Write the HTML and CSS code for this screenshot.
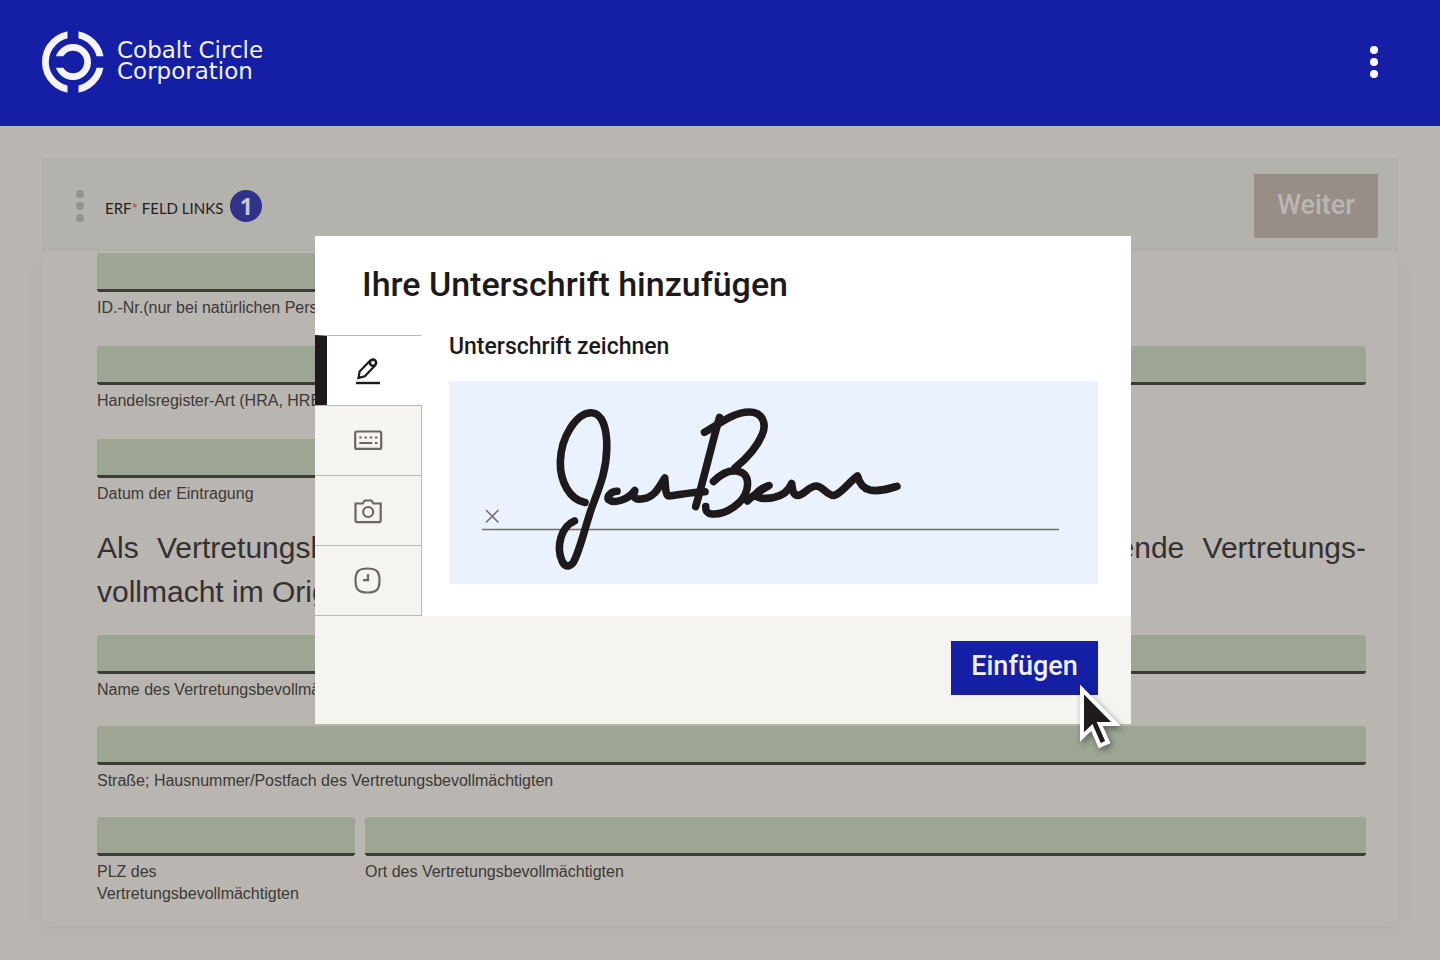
FILE: index.html
```html
<!DOCTYPE html>
<html lang="de">
<head>
    <meta charset="UTF-8">
    <meta name="viewport" content="width=device-width, initial-scale=1.0">
    <title>Cobalt Circle Corporation</title>
    <link rel="stylesheet" href="styles.css">
</head>
<body>
    <header class="header">
        <a class="brand" href="#">
            <svg class="brand-logo" viewBox="0 0 62 62" aria-hidden="true">
                <circle class="ring" cx="31" cy="31" r="27.6"/>
                <circle class="ring" cx="31" cy="31" r="14.6"/>
                <path class="gap" d="M25.5 0h11v10h-11zM25.5 52h11v10h-11zM50 25.3h12v11.4h-12zM10 25.3h13v11.4h-13z"/>
            </svg>
            <span class="brand-name">Cobalt Circle<br>Corporation</span>
        </a>
        <button class="dots-button" type="button" aria-label="Menü">
            <svg class="dots" viewBox="0 0 8 32"><circle cx="4" cy="4" r="4"/><circle cx="4" cy="16" r="4"/><circle cx="4" cy="28" r="4"/></svg>
        </button>
    </header>

    <main class="main">
        <div class="toolbar">
            <button class="dots-button muted" type="button" aria-label="Optionen">
                <svg class="dots" viewBox="0 0 8 32"><circle cx="4" cy="4" r="4"/><circle cx="4" cy="16" r="4"/><circle cx="4" cy="28" r="4"/></svg>
            </button>
            <span class="toolbar-text">ERF<span class="star">*</span> FELD LINKS</span>
            <span class="badge">1</span>
            <button class="next-button" type="button" disabled>Weiter</button>
        </div>

        <form class="document">
            <div class="field half">
                <input type="text" id="id-nr">
                <label for="id-nr">ID.-Nr.(nur bei natürlichen Personen)</label>
            </div>
            <div class="field">
                <input type="text" id="register">
                <label for="register">Handelsregister-Art (HRA, HRB)</label>
            </div>
            <div class="field half last">
                <input type="text" id="datum">
                <label for="datum">Datum der Eintragung</label>
            </div>

            <div class="paragraph">
                <p class="line full">Als Vertretungsbevollmächtigter fügen Sie bitte zusätzlich die entsprechende Vertretungs-</p>
                <p class="line">vollmacht im Original bei.</p>
            </div>

            <div class="field tight">
                <input type="text" id="name">
                <label for="name">Name des Vertretungsbevollmächtigten</label>
            </div>
            <div class="field tight">
                <input type="text" id="strasse">
                <label for="strasse">Straße; Hausnummer/Postfach des Vertretungsbevollmächtigten</label>
            </div>
            <div class="field-row">
                <div class="field plz">
                    <input type="text" id="plz">
                    <label for="plz">PLZ des Vertretungsbevollmächtigten</label>
                </div>
                <div class="field ort">
                    <input type="text" id="ort">
                    <label for="ort">Ort des Vertretungsbevollmächtigten</label>
                </div>
            </div>
        </form>
    </main>

    <div class="overlay">
        <section class="modal" role="dialog" aria-labelledby="modal-title">
            <h1 class="modal-title" id="modal-title">Ihre Unterschrift hinzufügen</h1>

            <div class="modal-body">
                <div class="tabs">
                    <button class="tab active" type="button" aria-label="Zeichnen">
                        <svg viewBox="0 0 30 30">
                            <path d="M3 27h24" stroke-width="2.4"/>
                            <path d="M17.400 4.300L6.600 15.600L5.500 21.900L11.800 20.200L22.300 9.300"/>
                            <circle cx="20" cy="6.700" r="3.100" stroke-width="2.500"/>
                        </svg>
                    </button>
                    <button class="tab" type="button" aria-label="Tippen">
                        <svg viewBox="0 0 30 30">
                            <rect x="2.200" y="5.500" width="26" height="17.400" rx="1.500"/>
                            <path d="M6.300 11.500h2.400M11.500 11.500h2.400M16.800 11.500h2.400M22 11.500h2.400M6.300 17h12.900M22 17h2.400"/>
                        </svg>
                    </button>
                    <button class="tab" type="button" aria-label="Foto">
                        <svg viewBox="0 0 30 30">
                            <path d="M2.500 7.500h7.300l2-3h6.600l2 3h7.300v16.700a2 2 0 0 1-2 2H4.500a2 2 0 0 1-2-2z"/>
                            <circle cx="15.200" cy="16" r="5"/>
                        </svg>
                    </button>
                    <button class="tab" type="button" aria-label="Verlauf">
                        <svg viewBox="0 0 30 30">
                            <path d="M14.500 2.500C23.500 2.500 26.500 5.500 26.500 14.500S23.500 26.500 14.500 26.500S2.500 23.500 2.500 14.500S5.500 2.500 14.500 2.500z"/>
                            <path d="M15 8v6.200h-5"/>
                        </svg>
                    </button>
                </div>

                <div class="panel">
                    <h2 class="panel-title">Unterschrift zeichnen</h2>
                    <div class="pad">
                        <svg class="pad-drawing" viewBox="449 381 649 203" role="img" aria-label="Unterschrift">
                            <path class="pad-line" d="M482 529.500H1059M486 510l12.500 12.500M498.500 510L486 522.500"/>
                            <g class="ink">
                                <path d="M585 502.500C570 500 560 482 560.300 462C561 436 577 412.500 591.500 412.700C603 413 607 430 606.800 447C606.500 472 599 488 592 507C586 524 581 546 575 559C572 567 566 568 562.500 562C555 546 562 526 574.500 521"/>
                                <path d="M617 491.300C612 491 606.500 496 608.500 499.500C614 504 628 500 634.800 490.500C631 500 639 499.500 643 498.800C655 497 659 487 664.800 478C665.500 487 665.500 496 669 496C676 495.500 692 492 705 491.800"/>
                                <path d="M719.500 417.500C711 447 704 478 695.700 506.500"/>
                                <path d="M704.500 432.300C719 424 734 412 749 412C763 412 767 424 762 435C757 447 746 459 735 468"/>
                                <path d="M713.500 481.500C720 475 728 470 736 471C746 472 749 479 747 489C744 503 726 515 712 514C707 513.500 705.500 511 705.700 506.500"/>
                                <path d="M747.500 501C753 495 761 490.500 769 485.500C762 488 757 491.500 755 496C763 500 785 500 791.700 483.500C792.500 490 793 495.500 798.500 495.500C805 494 809 486 816.500 486C823 486.500 827 495.500 834 495.500C841 494 850 481 857.500 476C859 482 862 488 870 490C879 492 888 489 897 486.300"/>
                            </g>
                        </svg>
                    </div>
                </div>
            </div>

            <div class="modal-footer">
                <div class="insert">
                    <button class="insert-button" type="button">Einfügen</button>
                    <svg class="cursor" viewBox="0 0 50 74" aria-hidden="true">
                        <path d="M8 9.500V57l9.800-9.500 8 18.200 8-3.500-8-18.200H42z"/>
                    </svg>
                </div>
            </div>
        </section>
    </div>
</body>
</html>
```
FILE: styles.css
```css
* {
    box-sizing: border-box;
}

body {
    margin: 0;
    min-height: 100vh;
    font-family: Roboto, "Liberation Sans", sans-serif;
    background: #bab6b1;
    color: #1e191a;
}

button {
    font-family: inherit;
    border: none;
    padding: 0;
    cursor: pointer;
}

.header {
    display: flex;
    justify-content: space-between;
    align-items: center;
    height: 126px;
    padding: 0 62px 2px 42px;
    background: #151fa5;
}

.brand {
    display: flex;
    align-items: center;
    gap: 13px;
    color: #f3f3f9;
    text-decoration: none;
}

.brand-logo {
    width: 62px;
    height: 62px;
}

.brand-logo .ring {
    fill: none;
    stroke: #f3f3f9;
    stroke-width: 6.8;
}

.brand-logo .gap {
    fill: #151fa5;
}

.brand-name {
    padding-bottom: 2px;
    font-family: "DejaVu Sans", sans-serif;
    font-size: 23px;
    line-height: 21px;
}

.dots-button {
    background: none;
    color: #ffffff;
}

.dots {
    display: block;
    width: 8px;
    height: 32px;
    fill: currentColor;
}

.muted {
    color: #96938e;
}

.main {
    padding: 32px 42px 34px;
}

.toolbar {
    display: flex;
    align-items: center;
    padding: 16px 20px 13px 34px;
    background: #b4b2ac;
}

.toolbar-text {
    margin: 3px 7px 0 21px;
    font-family: Lato, sans-serif;
    font-size: 15px;
    color: #24211f;
}

.star {
    color: #a3474b;
}

.badge {
    width: 32px;
    height: 32px;
    border-radius: 50%;
    background: #2f3389;
    color: #c9c6cc;
    font-family: "Open Sans", sans-serif;
    font-size: 23px;
    font-weight: bold;
    line-height: 32px;
    text-align: center;
}

.next-button {
    width: 124px;
    height: 64px;
    margin-left: auto;
    padding-bottom: 2px;
    background: #968e87;
    color: #bab6b1;
    font-size: 27px;
    font-weight: 500;
}

.document {
    padding: 2px 32px 21px 55px;
    background: #b9b5b0;
    box-shadow: 0 4px 16px rgba(0, 0, 0, 0.05);
    font-family: "Liberation Sans", Arial, sans-serif;
}

.field {
    margin-bottom: 27px;
}

.field.half {
    width: 60%;
}

.field.last {
    margin-bottom: 21px;
}

.field.tight {
    margin-bottom: 25px;
}

.field input {
    display: block;
    width: 100%;
    height: 39px;
    padding: 0 8px;
    border: none;
    border-bottom: 3px solid #3a3c35;
    border-radius: 3px;
    background: #9da694;
    font-size: 16px;
}

.field label {
    display: block;
    margin-top: 5px;
    font-size: 16px;
    line-height: 22px;
    color: #3c3937;
}

.field-row {
    display: flex;
    gap: 10px;
}

.field-row .field {
    margin-bottom: 0;
}

.plz {
    width: 258px;
}

.plz label {
    padding-right: 40px;
}

.ort {
    flex: 1;
}

.paragraph {
    margin-bottom: 21px;
    font-size: 30px;
    line-height: 44px;
    color: #353032;
}

.line {
    margin: 0;
}

.line.full {
    text-align: justify;
    text-align-last: justify;
}

.overlay {
    position: fixed;
    inset: 0;
    display: flex;
    justify-content: center;
    align-items: center;
    padding: 0 42px 0 48px;
}

.modal {
    width: 816px;
    background: #ffffff;
}

.modal-title {
    margin: 0;
    padding: 24px 47px 27px;
    font-size: 34px;
    font-weight: 500;
    line-height: 48px;
}

.modal-body {
    display: flex;
}

.tabs {
    display: flex;
    flex-direction: column;
    width: 107px;
    border-bottom: 1px solid #bcbab7;
}

.tab {
    display: flex;
    justify-content: center;
    align-items: center;
    height: 70px;
    border-top: 1px solid #bcbab7;
    border-right: 1px solid #bcbab7;
    background: #f6f4f1;
    color: #6b6662;
}

.tab svg {
    width: 30px;
    height: 30px;
    fill: none;
    stroke: currentColor;
    stroke-width: 2.2;
}

.tab.active {
    padding-right: 12px;
    border-left: 12px solid #1e191a;
    border-right-color: #ffffff;
    background: #ffffff;
    color: #1e191a;
}

.panel {
    flex: 1;
    padding: 0 33px 32px 27px;
}

.panel-title {
    margin: 0 0 22px;
    font-size: 23px;
    font-weight: 500;
    line-height: 24px;
}

.pad {
    background: #e9f2fe;
}

.pad-drawing {
    display: block;
    width: 100%;
}

.pad-line {
    fill: none;
    stroke: #6f6c6b;
    stroke-width: 1.6;
}

.ink {
    fill: none;
    stroke: #1e191a;
    stroke-width: 7.6;
    stroke-linecap: round;
    stroke-linejoin: round;
}

.modal-footer {
    display: flex;
    justify-content: flex-end;
    padding: 25px 33px 29px;
    background: #f6f4f1;
}

.insert {
    position: relative;
}

.insert-button {
    display: block;
    width: 147px;
    height: 54px;
    padding-bottom: 5px;
    background: #151fa5;
    color: #eef0fb;
    font-size: 27px;
    font-weight: 500;
}

.cursor {
    position: absolute;
    left: 123px;
    top: 39px;
    width: 50px;
    height: 74px;
    fill: #1e191a;
    stroke: #ffffff;
    stroke-width: 4;
    filter: drop-shadow(2px 3px 3px rgba(0, 0, 0, 0.4));
}
```
